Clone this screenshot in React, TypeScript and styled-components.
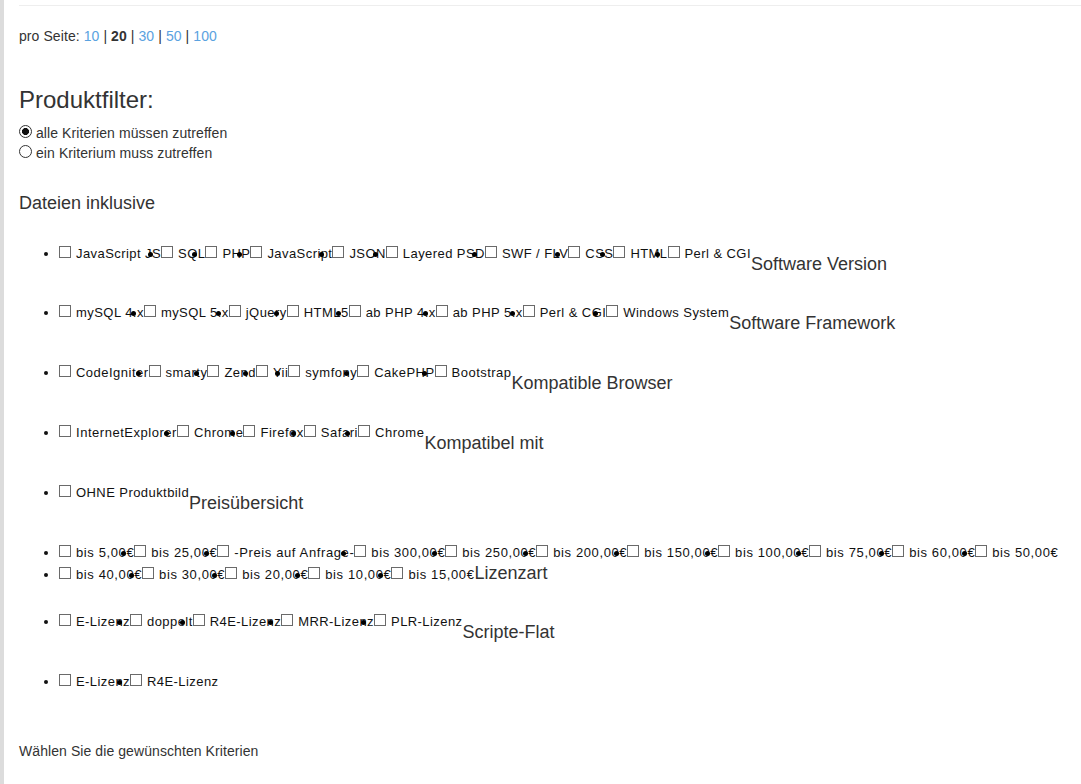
import React from "react";
import styled, { createGlobalStyle } from "styled-components";

const GlobalStyle = createGlobalStyle`
  html, body { margin: 0; padding: 0; background: #fff; }
  body {
    font-family: "Liberation Sans", Arial, sans-serif;
    font-size: 14px;
    line-height: 20px;
    color: #333;
    letter-spacing: 0.08px;
  }
`;

const Page = styled.div`
  display: flex;
  min-height: 784px;
`;

const SideBar = styled.div`
  flex: none;
  width: 4px;
  background: #dcdcdc;
`;

const Content = styled.main`
  flex: 1;
  padding: 5px 0 0 15px;
  min-width: 0;
`;

const Rule = styled.hr`
  margin: 0;
  height: 0;
  border: 0;
  border-top: 1px solid #eee;
`;

const PerPage = styled.p`
  margin: 20px 0 0;
  white-space: nowrap;
`;

const PageLink = styled.a`
  color: #5aa2e0;
  text-decoration: none;
`;

const Current = styled.b`
  color: #333;
`;

const FilterTitle = styled.h2`
  margin: 41px 0 0;
  font-size: 24px;
  line-height: 26px;
  font-weight: normal;
  letter-spacing: 0;
`;

const RadioGroup = styled.div`
  margin-top: 10px;
  display: flex;
  flex-direction: column;
`;

const RadioLabel = styled.label`
  display: block;
  height: 20px;
`;

const Radio = styled.input`
  appearance: none;
  -webkit-appearance: none;
  box-sizing: border-box;
  width: 13px;
  height: 13px;
  margin: 0 4px 0 0;
  border: 1px solid #333;
  border-radius: 50%;
  background: #fff;
  vertical-align: baseline;
  &:checked {
    background: radial-gradient(circle, #111 0 3.2px, #fff 3.8px);
  }
`;

const SectionTitle = styled.h3`
  margin: 30px 0 0;
  font-size: 18px;
  line-height: 20px;
  font-weight: normal;
  letter-spacing: 0;
`;

const FilterList = styled.ul`
  margin: 31px 0 0;
  padding-left: 40px;
  list-style: disc;
`;

const Row = styled.li<{ $gap: number; $ls: number }>`
  margin-top: ${(p) => p.$gap}px;
  height: 20px;
  font-size: 13px;
  line-height: 20px;
  letter-spacing: ${(p) => p.$ls}px;
  color: #111;
  white-space: nowrap;
`;

const Item = styled.span<{ $dot: boolean }>`
  position: relative;
  &::before {
    content: "";
    display: ${(p) => (p.$dot ? "block" : "none")};
    position: absolute;
    left: -13px;
    top: 50%;
    margin-top: -2px;
    width: 5px;
    height: 5px;
    border-radius: 50%;
    background: #000;
  }
`;

const Box = styled.input`
  appearance: none;
  -webkit-appearance: none;
  box-sizing: border-box;
  width: 12px;
  height: 12px;
  margin: 0 5px 0 0;
  border: 1px solid #6a6a6a;
  border-radius: 0;
  background: #fff;
  vertical-align: baseline;
`;

const GroupTitle = styled.span<{ $low: boolean }>`
  display: inline-block;
  font-size: 18px;
  line-height: 20px;
  letter-spacing: 0;
  color: #333;
  vertical-align: ${(p) => (p.$low ? "-12px" : "baseline")};
`;

const Hint = styled.p`
  margin: 49px 0 0;
`;

type RowData = { items: string[]; title?: string; low?: boolean; gap: number; ls: number };

const rows: RowData[] = [
  {
    gap: 0,
    ls: 0.43,
    items: ["JavaScript JS", "SQL", "PHP", "JavaScript", "JSON", "Layered PSD", "SWF / FLV", "CSS", "HTML", "Perl & CGI"],
    title: "Software Version",
    low: true,
  },
  {
    gap: 39,
    ls: 0.45,
    items: ["mySQL 4.x", "mySQL 5.x", "jQuery", "HTML5", "ab PHP 4.x", "ab PHP 5.x", "Perl & CGI", "Windows System"],
    title: "Software Framework",
    low: true,
  },
  {
    gap: 40,
    ls: 0.48,
    items: ["CodeIgniter", "smarty", "Zend", "Yii", "symfony", "CakePHP", "Bootstrap"],
    title: "Kompatible Browser",
    low: true,
  },
  {
    gap: 40,
    ls: 0.53,
    items: ["InternetExplorer", "Chrome", "Firefox", "Safari", "Chrome"],
    title: "Kompatibel mit",
    low: true,
  },
  { gap: 40, ls: 0.43, items: ["OHNE Produktbild"], title: "Preisübersicht", low: true },
  {
    gap: 40,
    ls: 0.61,
    items: [
      "bis 5,00€",
      "bis 25,00€",
      "-Preis auf Anfrage-",
      "bis 300,00€",
      "bis 250,00€",
      "bis 200,00€",
      "bis 150,00€",
      "bis 100,00€",
      "bis 75,00€",
      "bis 60,00€",
      "bis 50,00€",
    ],
  },
  {
    gap: 0,
    ls: 0.61,
    items: ["bis 40,00€", "bis 30,00€", "bis 20,00€", "bis 10,00€", "bis 15,00€"],
    title: "Lizenzart",
    low: false,
  },
  {
    gap: 29,
    ls: 0.43,
    items: ["E-Lizenz", "doppelt", "R4E-Lizenz", "MRR-Lizenz", "PLR-Lizenz"],
    title: "Scripte-Flat",
    low: true,
  },
  { gap: 40, ls: 0.43, items: ["E-Lizenz", "R4E-Lizenz"] },
];

export default function App() {
  return (
    <>
      <GlobalStyle />
      <Page>
        <SideBar />
        <Content>
          <Rule />
          <PerPage>
            pro Seite: <PageLink href="#">10</PageLink> | <Current>20</Current> |{" "}
            <PageLink href="#">30</PageLink> | <PageLink href="#">50</PageLink> |{" "}
            <PageLink href="#">100</PageLink>
          </PerPage>
          <FilterTitle>Produktfilter:</FilterTitle>
          <RadioGroup>
            <RadioLabel>
              <Radio type="radio" name="mode" defaultChecked />
              alle Kriterien müssen zutreffen
            </RadioLabel>
            <RadioLabel>
              <Radio type="radio" name="mode" />
              ein Kriterium muss zutreffen
            </RadioLabel>
          </RadioGroup>
          <SectionTitle>Dateien inklusive</SectionTitle>
          <FilterList>
            {rows.map((row, ri) => (
              <Row key={ri} $gap={row.gap} $ls={row.ls}>
                {row.items.map((label, i) => (
                  <Item key={i} $dot={i > 0}>
                    <Box type="checkbox" />
                    {label}
                  </Item>
                ))}
                {row.title && <GroupTitle $low={!!row.low}>{row.title}</GroupTitle>}
              </Row>
            ))}
          </FilterList>
          <Hint>Wählen Sie die gewünschten Kriterien</Hint>
        </Content>
      </Page>
    </>
  );
}
